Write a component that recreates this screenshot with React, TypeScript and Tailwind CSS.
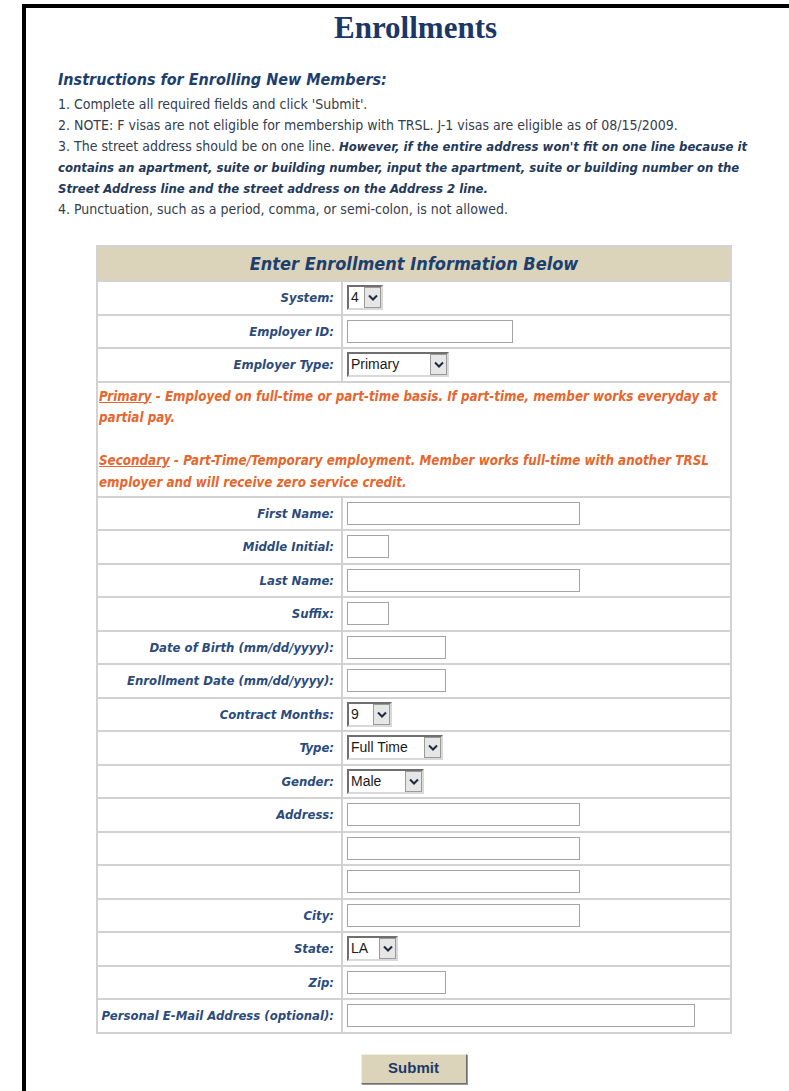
const sans = "font-['DejaVu_Sans_Condensed','Liberation_Sans',sans-serif]";

type Row =
  | { label: string; kind: 'input'; width: number }
  | { label: string; kind: 'select'; width: number; value: string };

const rowsTop: Row[] = [
  { label: 'System:', kind: 'select', width: 36, value: '4' },
  { label: 'Employer ID:', kind: 'input', width: 166 },
  { label: 'Employer Type:', kind: 'select', width: 102, value: 'Primary' },
];

const rowsBottom: Row[] = [
  { label: 'First Name:', kind: 'input', width: 233 },
  { label: 'Middle Initial:', kind: 'input', width: 42 },
  { label: 'Last Name:', kind: 'input', width: 233 },
  { label: 'Suffix:', kind: 'input', width: 42 },
  { label: 'Date of Birth (mm/dd/yyyy):', kind: 'input', width: 99 },
  { label: 'Enrollment Date (mm/dd/yyyy):', kind: 'input', width: 99 },
  { label: 'Contract Months:', kind: 'select', width: 45, value: '9' },
  { label: 'Type:', kind: 'select', width: 96, value: 'Full Time' },
  { label: 'Gender:', kind: 'select', width: 77, value: 'Male' },
  { label: 'Address:', kind: 'input', width: 233 },
  { label: '', kind: 'input', width: 233 },
  { label: '', kind: 'input', width: 233 },
  { label: 'City:', kind: 'input', width: 233 },
  { label: 'State:', kind: 'select', width: 51, value: 'LA' },
  { label: 'Zip:', kind: 'input', width: 99 },
  { label: 'Personal E-Mail Address (optional):', kind: 'input', width: 348 },
];

function FakeSelect({ value, width }: { value: string; width: number }) {
  return (
    <div
      className="flex h-[25px] items-stretch border-2 border-t-[#6f6f6f] border-l-[#6f6f6f] border-r-[#d8d8d8] border-b-[#d8d8d8] bg-white"
      style={{ width }}
    >
      <span className="flex-1 pl-[2px] font-['Liberation_Sans',sans-serif] text-[14px] leading-[21px] text-[#1a1a1a]">
        {value}
      </span>
      <span className="flex w-[17px] items-center justify-center border border-[#9a9a9a] bg-[#e6e6e6]">
        <svg width="10" height="7" viewBox="0 0 10 7" fill="none">
          <path d="M1 1.5 5 5.5 9 1.5" stroke="#1d2a3c" strokeWidth="2" />
        </svg>
      </span>
    </div>
  );
}

function FormRow({ row }: { row: Row }) {
  return (
    <div className="grid h-[33.5px] grid-cols-[245px_1fr] border-t-2 border-[#d2d2d2]">
      <div className="flex items-center justify-end whitespace-nowrap border-r-2 border-[#d2d2d2] pr-[7px] text-[13px] font-bold italic text-[#2a4b7c]">
        {row.label}
      </div>
      <div className="flex items-center pl-[4px]">
        {row.kind === 'select' ? (
          <FakeSelect value={row.value} width={row.width} />
        ) : (
          <input
            type="text"
            className="h-[23px] border border-[#a4a4a4] bg-white outline-none"
            style={{ width: row.width }}
          />
        )}
      </div>
    </div>
  );
}

export default function App() {
  return (
    <div className={`min-h-screen overflow-hidden bg-white pl-[22px] pt-[4px] ${sans}`}>
      <div className="min-h-[1087px] border-l-4 border-t-4 border-black">
        <h1 className="mt-[3px] pl-[16px] text-center font-['Liberation_Serif',serif] text-[31px] font-bold leading-[34px] text-[#1b3768]">
          Enrollments
        </h1>

        {/* instructions */}
        <div className="ml-[32px] mt-[25px] w-[730px]">
          <h2 className="text-[16px] font-bold italic leading-[20px] text-[#1e3f6e]">
            Instructions for Enrolling New Members:
          </h2>
          <p className="mt-[4px] whitespace-nowrap text-[14px] leading-[21px] text-[#34404e]">
            1. Complete all required fields and click 'Submit'.
            <br />
            2. NOTE: F visas are not eligible for membership with TRSL. J-1 visas are eligible as of 08/15/2009.
            <br />
            3. The street address should be on one line.{' '}
            <span className="text-[13px] font-bold italic text-[#23395a]">
              However, if the entire address won't fit on one line because it
              <br />
              contains an apartment, suite or building number, input the apartment, suite or building number on the
              <br />
              Street Address line and the street address on the Address 2 line.
            </span>
            <br />
            4. Punctuation, such as a period, comma, or semi-colon, is not allowed.
          </p>
        </div>

        {/* enrollment form */}
        <div className="ml-[70px] mt-[25px] w-[636px] border-x-2 border-b-2 border-[#d2d2d2]">
          <div className="flex h-[35px] items-center justify-center border-t-2 border-[#d2d2d2] bg-[#dbd4bb] text-[18px] font-bold italic text-[#1c3f6e]">
            Enter Enrollment Information Below
          </div>
          {rowsTop.map((r, i) => (
            <FormRow key={i} row={r} />
          ))}
          <div className="h-[115px] border-t-2 border-[#d2d2d2] pl-[1px] pt-[3px] text-[13.3px] font-bold italic leading-[21.5px] text-[#e6662e]">
            <span className="underline">Primary</span> - Employed on full-time or part-time basis. If part-time, member works everyday at
            <br />
            partial pay.
            <br />
            <br />
            <span className="underline">Secondary</span> - Part-Time/Temporary employment. Member works full-time with another TRSL
            <br />
            employer and will receive zero service credit.
          </div>
          {rowsBottom.map((r, i) => (
            <FormRow key={i} row={r} />
          ))}
        </div>

        <div className="mt-[20px] flex justify-center pl-[12px]">
          <button className="h-[30px] w-[106px] border border-t-[#f0ece0] border-l-[#f0ece0] border-r-[#6e6e6e] border-b-[#6e6e6e] bg-[#dbd4bb] font-['Liberation_Sans',sans-serif] text-[15px] font-bold text-[#1c3a66] shadow-[1px_1px_0_#9a9a9a]">
            Submit
          </button>
        </div>
      </div>
    </div>
  );
}
